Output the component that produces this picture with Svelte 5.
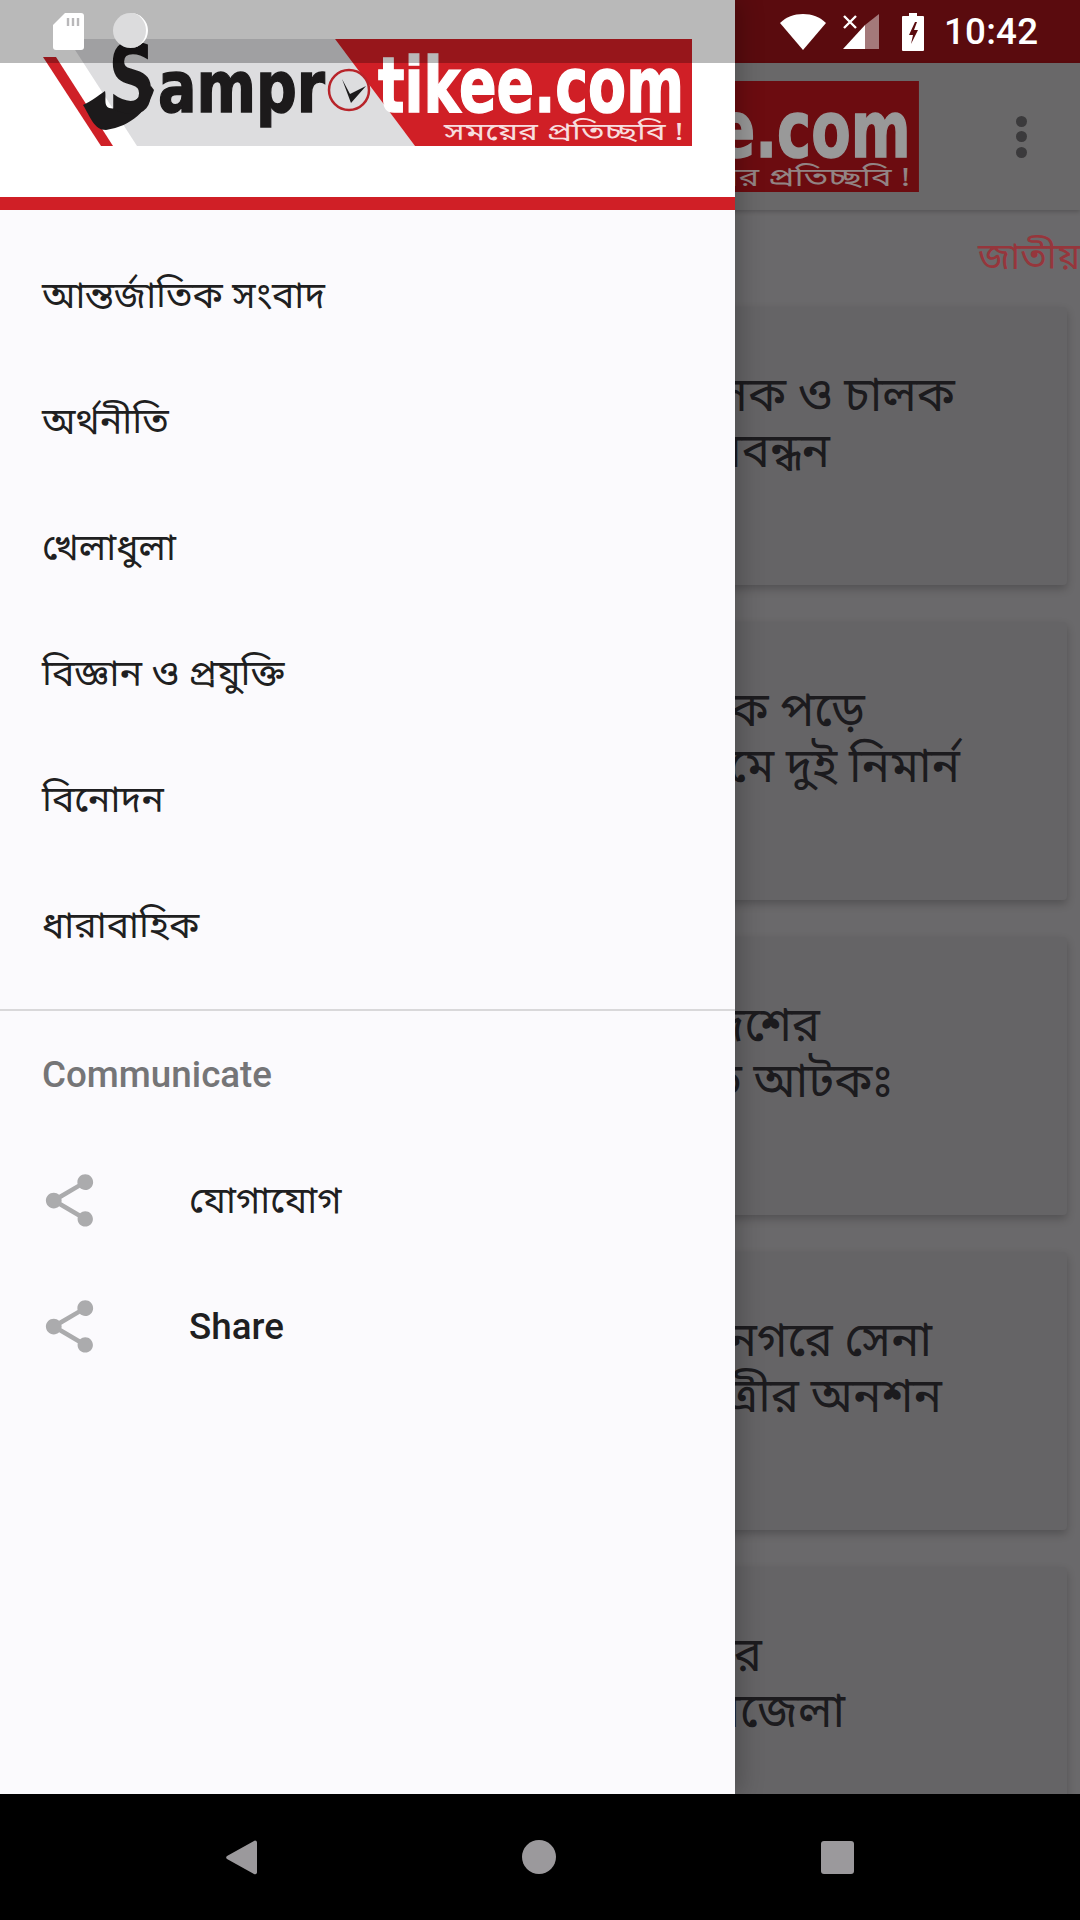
<script>
	const menu = ['আন্তর্জাতিক সংবাদ', 'অর্থনীতি', 'খেলাধুলা', 'বিজ্ঞান ও প্রযুক্তি', 'বিনোদন', 'ধারাবাহিক'];
	// end = x where the line stops, the start of each line sits behind the drawer
	const cards = [
		[{ text: 'বাস পরিচালক ও চালক', end: 955 }, { text: 'শ্রমিকদের মানববন্ধন', end: 830 }],
		[{ text: 'ইট খসে মাথায় ট্রাক পড়ে', end: 865 }, { text: 'পরিশ্রমে দুই নিমার্ন', end: 960 }],
		[{ text: 'বাংলাদেশের', end: 820 }, { text: 'তিন যুবক ভারতে আটকঃ', end: 893 }],
		[{ text: 'রাজনগরে সেনা', end: 932 }, { text: 'কলেজ ছাত্রীর অনশন', end: 942 }],
		[{ text: 'শহর', end: 762 }, { text: 'তিনজেলা', end: 845 }]
	];
</script>

{#snippet logo(cls)}
	<svg class={cls} viewBox="0 0 692 107" aria-hidden="true">
		<polygon points="68,0 335,0 415,107 137,107" fill="#dddddf" />
		<polygon points="43,18 56,18 113,107 101,107" fill="#cf2027" />
		<polygon points="335,0 692,0 692,107 415,107" fill="var(--logo-red)" />
		<path d="M83 66c10-5 15-9 22-14 2 8-4 20 12 17 14-3 26-12 34-22l3 4c-6 20-22 36-48 40-12 0-16-14-23-25z" fill="#1c1a1b" />
		<text x="108" y="74" class="logo-s" textLength="48" lengthAdjust="spacingAndGlyphs">S</text>
		<text x="158" y="73" class="logo-dark" textLength="167" lengthAdjust="spacingAndGlyphs">ampr</text>
		<circle cx="349" cy="51" r="20" fill="none" stroke="#b8242a" stroke-width="2.500" />
		<path d="M342 40l8 15 16-8-15 17z" fill="#1c1a1b" />
		<text x="378" y="73" class="logo-white" textLength="306" lengthAdjust="spacingAndGlyphs">tikee.com</text>
		<text x="444" y="101" class="logo-sub" textLength="240" lengthAdjust="spacingAndGlyphs">সময়ের প্রতিচ্ছবি !</text>
	</svg>
{/snippet}

{#snippet shareIcon()}
	<svg class="share" viewBox="0 0 24 24" aria-hidden="true">
		<path d="M18 16.08c-.76 0-1.44.3-1.96.77L8.91 12.7c.05-.23.09-.46.09-.7s-.04-.47-.09-.7l7.05-4.11c.54.5 1.25.81 2.04.81 1.66 0 3-1.34 3-3s-1.34-3-3-3-3 1.34-3 3c0 .24.04.47.09.7L8.04 9.81C7.5 9.31 6.79 9 6 9c-1.66 0-3 1.34-3 3s1.34 3 3 3c.79 0 1.5-.31 2.04-.81l7.12 4.16c-.05.21-.08.43-.08.65 0 1.61 1.31 2.92 2.92 2.92 1.61 0 2.92-1.31 2.92-2.92s-1.31-2.92-2.92-2.92z" />
	</svg>
{/snippet}

<div class="phone">
	<div class="screen">
		<div class="statusbar">
			<svg class="wifi" viewBox="0 0 46 36"><path d="M0 9C6 3 14 0 23 0s17 3 23 9L23 36z" /></svg>
			<svg class="signal" viewBox="0 0 36 35">
				<path d="M36 0v35H22V11z" opacity="0.45" />
				<path d="M22 11v24H0z" />
				<path d="M1 2l12 12M13 2L1 14" fill="none" stroke="#fff" stroke-width="2.4" />
			</svg>
			<svg class="battery" viewBox="0 0 22 38">
				<path d="M7 0h8v3h6a1 1 0 0 1 1 1v33a1 1 0 0 1-1 1H1a1 1 0 0 1-1-1V4a1 1 0 0 1 1-1h6z" />
				<path d="M13 9l-6 13h4l-2 9 7-14h-4l3-8z" fill="#5a0b0e" />
			</svg>
			<span class="time">10:42</span>
		</div>

		<div class="toolbar">
			{@render logo('toolbar-logo')}
			<div class="dots"><i></i><i></i><i></i></div>
		</div>

		<div class="tabs"><span>জাতীয়</span></div>

		<div class="cards">
			{#each cards as lines}
				<div class="card">
					{#each lines as line}
						<p style="width: {line.end - 42}px">{line.text}</p>
					{/each}
				</div>
			{/each}
		</div>
	</div>

	<div class="scrim"></div>

	<aside class="drawer">
		<header class="drawer-head">{@render logo('drawer-logo')}</header>
		<nav class="menu">
			{#each menu as item}
				<div class="row bn">{item}</div>
			{/each}
		</nav>
		<div class="section">
			<h3>Communicate</h3>
			<div class="row icon-row bn">
				{@render shareIcon()}
				<span>যোগাযোগ</span>
			</div>
			<div class="row icon-row latin">
				{@render shareIcon()}
				<span>Share</span>
			</div>
		</div>
		<div class="drawer-status">
			<svg class="sd" viewBox="0 0 31 37">
				<path d="M12 0h16a3 3 0 0 1 3 3v31a3 3 0 0 1-3 3H3a3 3 0 0 1-3-3V12z" fill="#fff" />
				<path d="M15 5v8M20 5v8M25 5v8" stroke="#b9b8ba" stroke-width="2.4" />
			</svg>
			<div class="notif-dot"></div>
		</div>
	</aside>

	<div class="navbar">
		<svg class="nav-back" viewBox="0 0 31 35"><path d="M29 0.5a2 2 0 0 1 2 2v30a2 2 0 0 1-3 1.500L1 19a2 2 0 0 1 0-3L28 1z" /></svg>
		<div class="nav-home"></div>
		<div class="nav-recent"></div>
	</div>
</div>

<style>
	:global(body) {
		margin: 0;
	}

	.phone {
		position: relative;
		width: 1080px;
		height: 1920px;
		overflow: hidden;
		font-family: Roboto, 'Noto Sans', 'Noto Sans Bengali', sans-serif;
		background: #000;
	}

	.screen {
		display: flex;
		flex-direction: column;
		height: 1794px;
		overflow: hidden;
		background: #b1afb2;
		isolation: isolate;
	}

	.statusbar {
		flex: none;
		height: 63px;
		background: #5a0b0e;
		display: flex;
		align-items: center;
		color: #fff;
		padding-left: 780px;
	}

	.statusbar svg {
		fill: #fff;
		flex: none;
	}

	.wifi {
		width: 46px;
		height: 36px;
		margin-right: 17px;
	}

	.signal {
		width: 36px;
		height: 35px;
		margin-right: 23px;
	}

	.battery {
		width: 22px;
		height: 38px;
		margin-right: 20px;
	}

	.time {
		font-size: 36.75px;
		font-weight: 500;
		letter-spacing: 0.2px;
	}

	.toolbar {
		--logo-red: #b4141b;
		flex: none;
		height: 147px;
		display: flex;
		align-items: center;
		padding-left: 200px;
		background: #afaeaf;
		box-shadow: 0 2px 4px rgba(0, 0, 0, 0.18);
		position: relative;
		z-index: 1;
	}

	.toolbar-logo {
		width: 720px;
		height: 111px;
		flex: none;
	}

	.dots {
		display: flex;
		flex-direction: column;
		gap: 4.500px;
		margin-left: 96px;
	}

	.dots i {
		width: 11px;
		height: 11px;
		border-radius: 50%;
		background: #636164;
	}

	.tabs {
		flex: none;
		height: 97px;
		padding-left: 978px;
		display: flex;
		align-items: center;
		white-space: nowrap;
		overflow: hidden;
		font-size: 37.5px;
		color: #fb5a64;
	}

	.cards {
		display: flex;
		flex-direction: column;
		gap: 37px;
		padding: 0 13px;
	}

	.card {
		flex: none;
		height: 278px;
		box-sizing: border-box;
		padding-top: 60px;
		padding-left: 29px;
		background: #a8a7aa;
		border-radius: 4px;
		box-shadow: 0 4px 8px rgba(0, 0, 0, 0.22);
		font-size: 47.25px;
		color: #302e33;
	}

	.card p {
		margin: 0;
		line-height: 56px;
		white-space: nowrap;
		text-align: right;
	}

	.scrim {
		position: absolute;
		inset: 63px 0 126px 0;
		background: rgba(0, 0, 0, 0.4);
	}

	.drawer {
		--logo-red: #d01f26;
		position: absolute;
		top: 0;
		left: 0;
		bottom: 126px;
		width: 735px;
		background: #fbfafd;
		box-shadow: 6px 0 22px rgba(0, 0, 0, 0.22);
		color: #212121;
	}

	.drawer-head {
		height: 197px;
		background: #fff;
		border-bottom: 13px solid #d01f26;
	}

	.drawer-logo {
		display: block;
		width: 692px;
		height: 107px;
		padding-top: 39px;
	}

	.menu {
		padding-top: 25px;
		padding-bottom: 18px;
		border-bottom: 2px solid #d9d8da;
	}

	.row {
		height: 126px;
		display: flex;
		align-items: center;
		padding-left: 42px;
		font-size: 37.5px;
		color: #1f1f21;
	}

	.section h3 {
		margin: 0;
		height: 126px;
		display: flex;
		align-items: center;
		padding-left: 42px;
		font-size: 36.75px;
		font-weight: 500;
		color: #757577;
	}

	.icon-row {
		padding-left: 38px;
	}

	.icon-row.bn span {
		position: relative;
		top: 3px;
	}

	.icon-row.latin {
		font-size: 36.75px;
		font-weight: 500;
	}

	.share {
		width: 63px;
		height: 63px;
		fill: #ababad;
		margin-right: 88px;
		flex: none;
	}

	.drawer-status {
		position: absolute;
		top: 0;
		left: 0;
		width: 100%;
		height: 63px;
		background: rgba(0, 0, 0, 0.275);
	}

	.sd {
		position: absolute;
		left: 53px;
		top: 13px;
		width: 31px;
		height: 37px;
	}

	.notif-dot {
		position: absolute;
		left: 113px;
		top: 13px;
		width: 35px;
		height: 35px;
		border-radius: 50%;
		background: #dcdcdd;
		border-right: 2px solid #fff;
		box-sizing: border-box;
	}

	.navbar {
		position: absolute;
		left: 0;
		right: 0;
		bottom: 0;
		height: 126px;
		background: #000;
		display: flex;
		align-items: center;
		padding-left: 226px;
	}

	.nav-back {
		width: 31px;
		height: 35px;
		fill: #9b999c;
	}

	.nav-home {
		width: 34px;
		height: 34px;
		border-radius: 50%;
		background: #9b999c;
		margin-left: 265px;
	}

	.nav-recent {
		width: 33px;
		height: 33px;
		border-radius: 3px;
		background: #9b999c;
		margin-left: 265px;
	}

	.logo-s {
		font: bold 96px 'DejaVu Sans', sans-serif;
		fill: #1c1a1b;
	}

	.logo-dark {
		font: bold 72px 'DejaVu Sans', sans-serif;
		fill: #1c1a1b;
		stroke: #1c1a1b;
		stroke-width: 1.500px;
	}

	.logo-white {
		font: bold 76px 'DejaVu Sans', sans-serif;
		fill: #fff;
		stroke: #fff;
		stroke-width: 1.500px;
	}

	.logo-sub {
		font: 24px 'Noto Sans Bengali', 'Noto Sans', sans-serif;
		fill: #fff;
		opacity: 0.85;
	}
</style>
